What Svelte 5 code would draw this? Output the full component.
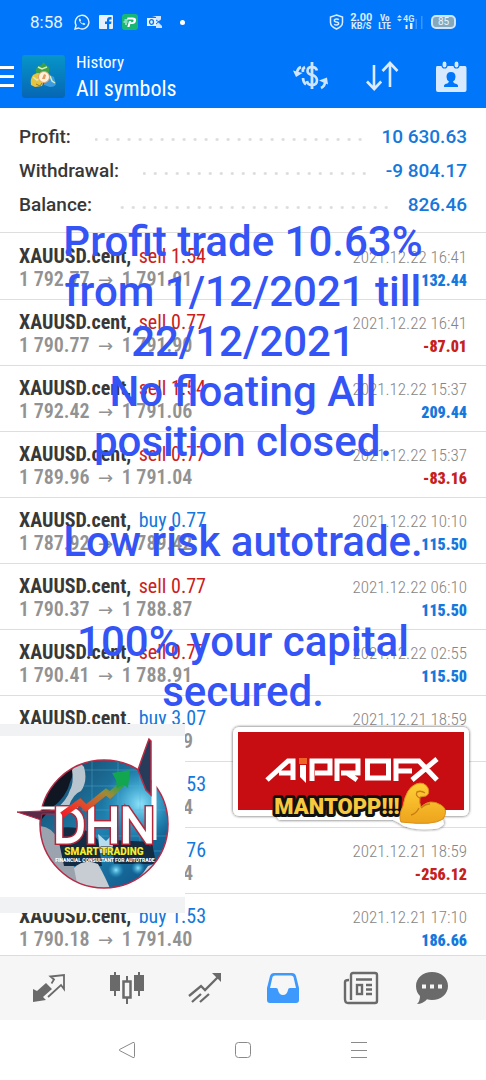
<script>
  const summary = [
    { label: 'Profit:', value: '10 630.63' },
    { label: 'Withdrawal:', value: '-9 804.17' },
    { label: 'Balance:', value: '826.46' }
  ];

  const trades = [
    { side: 'sell', volume: '1.54', open: '1 792.77', close: '1 791.91', time: '2021.12.22 16:41', result: '132.44' },
    { side: 'sell', volume: '0.77', open: '1 790.77', close: '1 791.90', time: '2021.12.22 16:41', result: '-87.01' },
    { side: 'sell', volume: '1.54', open: '1 792.42', close: '1 791.06', time: '2021.12.22 15:37', result: '209.44' },
    { side: 'sell', volume: '0.77', open: '1 789.96', close: '1 791.04', time: '2021.12.22 15:37', result: '-83.16' },
    { side: 'buy', volume: '0.77', open: '1 787.92', close: '1 789.42', time: '2021.12.22 10:10', result: '115.50' },
    { side: 'sell', volume: '0.77', open: '1 790.37', close: '1 788.87', time: '2021.12.22 06:10', result: '115.50' },
    { side: 'sell', volume: '0.77', open: '1 790.41', close: '1 788.91', time: '2021.12.22 02:55', result: '115.50' },
    { side: 'buy', volume: '3.07', open: '', close: '9', time: '2021.12.21 18:59', result: '' },
    { side: 'buy', volume: '1.53', open: '', close: '4', time: '', result: '' },
    { side: 'buy', volume: '0.76', open: '', close: '4', time: '2021.12.21 18:59', result: '-256.12' },
    { side: 'buy', volume: '1.53', open: '1 790.18', close: '1 791.40', time: '2021.12.21 17:10', result: '186.66' }
  ];

  const caption = [
    'Profit trade 10.63%',
    'from 1/12/2021 till',
    '22/12/2021',
    'No floating All',
    'position closed.',
    '',
    'Low risk autotrade.',
    '',
    '100% your capital',
    'secured.'
  ];
</script>

<div class="app">
  <header>
    <div class="status">
      <span class="clock">8:58</span>
      <svg width="16" height="16" viewBox="0 0 16 16" fill="none" stroke="#e8f2ff" stroke-width="1.4">
        <path d="M1 15l1.1-3.7A6.8 6.8 0 1 1 4.700 14z" />
        <path d="M5.200 4.500c-.8 1 0 3 1.500 4.500s3.300 2.500 4.500 1.500l-.1-1-1.600-.8-.9.800c-1-.4-1.900-1.300-2.300-2.200l.8-.9-.7-1.700z" fill="#e8f2ff" stroke="none" />
      </svg>
      <svg width="14" height="14" viewBox="0 0 14 14">
        <rect width="14" height="14" rx="1" fill="#e8f2ff" />
        <path d="M8 14V9H6V6.600h2V5c0-2 1-3 3-3h1.500v2.400H11c-.6 0-.8.300-.8.900v1.300h2.300L12.100 9h-1.900v5z" fill="#0077fb" />
      </svg>
      <svg width="16" height="16" viewBox="0 0 16 16">
        <rect width="16" height="16" rx="3" fill="#19b775" />
        <path d="M5.500 3.500h5q4 0 3.500 3.300-.5 3.200-4 3.200H8.300l-.8 3H5.300l1.700-6h2.300l-.4 1.300h1q1.400 0 1.700-1.300.2-1.400-1.300-1.400H5zM2.500 5.500h3v1h-3zM1.500 7.500h4v1h-4zM3 9.500h2v1H3z" fill="#fff" />
      </svg>
      <svg width="16" height="14" viewBox="0 0 16 14">
        <path d="M5 1h9v4l-3 2 4 4v2H9V2z" fill="#cfe4ff" />
        <rect y="3" width="9" height="8" fill="#e8f2ff" />
        <ellipse cx="4.500" cy="7" rx="2" ry="2.300" fill="none" stroke="#0077fb" stroke-width="1.300" />
        <path d="M9 5l6 4M9 9l6-5" stroke="#0077fb" />
      </svg>
      <i class="dot"></i>
      <div class="signals">
        <svg width="15" height="16" viewBox="0 0 15 16" fill="none" stroke="#dcebff" stroke-width="1.500">
          <path d="M7.500 1l6 2v5.500c0 3-2.500 5-6 6.500-3.500-1.500-6-3.500-6-6.500V3z" />
          <path d="M9.800 5.800Q9 4.900 7.500 5 5.400 5.100 5.400 6.500T7.500 8t2.100 1.500T7.500 11Q6 11 5.200 10.200" />
        </svg>
        <span class="rate"><b>2.00</b><b>KB/S</b></span>
        <span class="lte"><b>Vo</b><b>LTE</b></span>
        <svg width="26" height="16" viewBox="0 0 26 16">
          <path d="M0 3.500L2.500 1 5 3.500zM0 5l2.500 2.500L5 5z" fill="#cfe4ff" />
          <text x="6" y="7.500" font-size="9" font-weight="700" fill="#cfe4ff">4G</text>
          <path d="M8.500 11h2v4h-2zM13 9h2.500v6H13z" fill="#e8f2ff" />
          <path d="M18.500 5h1.500v10h-1.500zM24 2h1.500v13H24z" fill="#3d96fb" />
        </svg>
        <span class="battery">85</span>
      </div>
    </div>

    <div class="toolbar">
      <button class="menu" aria-label="Menu"><i></i><i></i><i></i></button>
      <svg class="logo" width="43" height="43" viewBox="0 0 43 43">
        <defs>
          <linearGradient id="tile" x1="0" y1="0" x2="0" y2="1">
            <stop offset="0" stop-color="#0795c9" /><stop offset="1" stop-color="#0666b4" />
          </linearGradient>
        </defs>
        <rect width="43" height="43" rx="3" fill="url(#tile)" />
        <path d="M21.500 7q2 3 5 4.500 2 4-1 8l-5 2-6-3q-2-4 1.500-7 4-1 5.500-4.500z" fill="#3da04b" />
        <path d="M9 30q-1-6 2-10l4-2q6 0 8 5l-3 8-7 1z" fill="#e8c33d" />
        <path d="M22 24q2-5 6-4l4 2q1 4 2 7-1 3-6 3l-6-2z" fill="#3d9be0" />
        <path d="M16 12l4 2 5-2M11 22l4 3 4-2M28 21l2 5 3 2" stroke="#d5eebc" fill="none" stroke-width="1.500" />
        <path d="M14 29l4 2 2-3" fill="none" stroke="#9b7a1c" />
        <circle cx="22" cy="22" r="5.500" fill="#fff1dc" stroke="#dfa069" />
        <path d="M20 24l2-5 2 1-1 4z" fill="#e59b60" />
      </svg>
      <h1><small>History</small>All symbols</h1>
      <div class="actions">
        <button aria-label="Convert currency">
          <svg width="36" height="30" viewBox="0 0 36 30" fill="none" stroke="#cfe5ff" stroke-width="2.600">
            <path d="M19 1v27" stroke-width="2.800" />
            <path d="M24 9.500Q23 6 19 6q-4.500 0-4.500 4 0 3 4.500 4t5 5q0 5-5 5-4.500 0-5-4" />
            <path d="M12 6q-3 1.500-2 5M10 17q0 4 3 6.500" />
            <path d="M8 6Q5 7 4 11" /><path d="M0 9.500L3 16l6.500-4z" fill="#cfe5ff" stroke="none" />
            <path d="M28 27q4-2 4-6" /><path d="M26 19.500l8-3 1 7z" fill="#cfe5ff" stroke="none" />
          </svg>
        </button>
        <button aria-label="Sort">
          <svg width="34" height="30" viewBox="0 0 34 30" fill="none" stroke="#dcebff" stroke-width="2.600">
            <path d="M9 4v24M2 20.500L9.200 28l7-7.500M25 26V2M17.500 10L25 2l7.500 8" />
          </svg>
        </button>
        <button aria-label="Choose period">
          <svg width="32" height="33" viewBox="0 0 32 33">
            <path d="M2 6h28q1.500 0 1.500 2v22q0 2-2 2H3q-2 0-2-2V8q0-2 1-2z" fill="#d6e9ff" />
            <g fill="#d6e9ff" stroke="#0077fb" stroke-width="1.200">
              <rect x="7" y="1" width="5" height="7" rx="2.500" /><rect x="19" y="1" width="5" height="7" rx="2.500" />
            </g>
            <path d="M16 12q-4.500 0-4.500 5 0 3 2.500 4.500-.5 2-3.500 2.500-2 .5-1.500 3h14q.5-2.500-1.500-3-3-.5-3.500-2.500 2.500-1.500 2.500-4.500 0-5-4.500-5z" fill="#0077fb" />
          </svg>
        </button>
      </div>
    </div>
  </header>

  <dl class="summary">
    {#each summary as row}
      <div><dt>{row.label}</dt><span class="leader"></span><dd>{row.value}</dd></div>
    {/each}
  </dl>

  <ul class="trades">
    {#each trades as t}
      <li>
        <div class="line">
          <span><b>XAUUSD.cent,</b> <em class={t.side}>{t.side} {t.volume}</em></span>
          <time>{t.time}</time>
        </div>
        <div class="line prices">
          {#if t.open}
            <span>{t.open}<i>→</i>{t.close}</span>
          {:else}
            <span class="partial">{t.close}</span>
          {/if}
          <strong class:loss={t.result.startsWith('-')}>{t.result}</strong>
        </div>
      </li>
    {/each}
  </ul>

  <nav class="tabs">
    <button aria-label="Quotes">
      <svg width="34" height="30" viewBox="0 0 34 30">
        <path d="M1 16l4 2 9-8 6 6-9 8 3 3-13 2z" fill="#6a6a6a" />
        <path d="M16 24L29 12l3 4V2L18.500 3.500l3.500 3-2.500 4" fill="none" stroke="#6a6a6a" stroke-width="1.800" />
      </svg>
    </button>
    <button aria-label="Charts">
      <svg width="36" height="34" viewBox="0 0 36 34">
        <path d="M1 4h10v16H1zM25 4h10v16H25zM5 1h2v24H5zM29 1h2v24h-2zM17 5h2v5h-2zM17 27h2v6h-2z" fill="#6a6a6a" />
        <rect x="14.500" y="10.500" width="7" height="16" fill="none" stroke="#6a6a6a" stroke-width="2.500" />
      </svg>
    </button>
    <button aria-label="Trade">
      <svg width="34" height="32" viewBox="0 0 34 32" fill="none" stroke="#6a6a6a" stroke-width="2.300">
        <path d="M1 24l12-10 4 4L31 4M4 30l9-8M12 30l9-8" />
        <path d="M24 1h9v9z" fill="#6a6a6a" stroke="none" />
      </svg>
    </button>
    <button aria-label="History" aria-current="page">
      <svg width="34" height="32" viewBox="0 0 34 32">
        <path fill-rule="evenodd" d="M8 1h18q3 0 4 3l3 12v12q0 3-3 3H4q-3 0-3-3V16L4 4q1-3 4-3zm1 2.500Q7 3.500 6.500 5L4 16h6q2 0 2 2 1 5 5 5t5-5q0-2 2-2h6L27.500 5Q27 3.500 25 3.500z" fill="#3d99fb" />
      </svg>
    </button>
    <button aria-label="News">
      <svg width="36" height="34" viewBox="0 0 36 34" fill="none" stroke="#6a6a6a" stroke-width="2.400">
        <path d="M8 29V4q0-2 2-2h22q2 0 2 2v26q0 2-2 2H5q-3 0-3-4V11q0-2 4-2M13 8.500h16M23 14h6M23 18.500h6M23 23h6" />
        <rect x="14" y="14" width="5" height="9" />
      </svg>
    </button>
    <button aria-label="Messages">
      <svg width="34" height="34" viewBox="0 0 34 34">
        <path d="M17 1c9 0 16 6 16 14s-7 14-16 14q-3 0-5-.8Q8 33 2 33q3-3 3-8-4-4-4-10C1 7 8 1 17 1z" fill="#6a6a6a" />
        <path d="M7 13.500h4v4H7zM15 13.500h4v4h-4zM23 13.500h4v4h-4z" fill="#f6f6f6" />
      </svg>
    </button>
  </nav>

  <nav class="system">
    <button aria-label="Back">
      <svg width="18" height="18" viewBox="0 0 18 18" fill="none" stroke="#8a8a8a"><path d="M15 1.500q1.500-.5 1.500 1v13q0 1.500-1.500 1L1.500 9.500q-.8-.5 0-1z" /></svg>
    </button>
    <button aria-label="Home">
      <svg width="18" height="18" viewBox="0 0 18 18" fill="none" stroke="#8a8a8a"><rect x="1.500" y="1.500" width="15" height="15" rx="3" /></svg>
    </button>
    <button aria-label="Recent apps">
      <svg width="18" height="18" viewBox="0 0 18 18" stroke="#8a8a8a"><path d="M1 1.500h16M1 9.500h16M1 16.500h16" /></svg>
    </button>
  </nav>

  <div class="caption">
    {#each caption as line}<p>{line}</p>{/each}
  </div>

  <div class="badge">
    <svg width="185" height="161" viewBox="0 0 185 161">
      <defs>
        <linearGradient id="globe" x1="0" y1="0" x2="1" y2="1">
          <stop offset="0" stop-color="#153b5b" /><stop offset=".5" stop-color="#1f83b1" /><stop offset="1" stop-color="#0c4d80" />
        </linearGradient>
        <linearGradient id="rise" x1="0" y1="1" x2="1" y2="0">
          <stop offset="0" stop-color="#f01c28" /><stop offset=".3" stop-color="#e8432a" /><stop offset=".7" stop-color="#a08a35" /><stop offset="1" stop-color="#12a650" />
        </linearGradient>
        <radialGradient id="shine">
          <stop offset="0" stop-color="#8fe3fb" /><stop offset="1" stop-color="#2ba5d5" stop-opacity="0" />
        </radialGradient>
        <clipPath id="disc"><circle cx="104" cy="88" r="64" /></clipPath>
      </defs>
      <circle cx="104" cy="88" r="64" fill="url(#globe)" />
      <g clip-path="url(#disc)">
        <circle cx="140" cy="68" r="38" fill="url(#shine)" />
        <path d="M82 50h90M82 74h90M84 34h80M92 20v60M118 20v70M140 20v100M60 100h110M130 115h40" stroke="#55b4d7" stroke-width=".7" opacity=".6" />
        <path d="M36 76Q38 30 80 22q-6 14-10 24-3 14-18 26-8 8-14 16z" fill="#101722" />
        <path d="M72 34q7-10 12-3 4 14-3 24-8 3-12 15-6 5-12 2 10-8 13-18 4-7 2-20z" fill="#b8c5cf" />
        <path d="M38 90q14 0 20 14l18 30 14 30H60Q36 140 38 90z" fill="#9ba4ae" />
        <path d="M56 92q30-4 42 12l4 26H64zM112 104l40 2 4 22-42 0z" fill="#142b44" />
        <path d="M74 132q10-10 24-4 10 18 14 30-20 4-34-6z" fill="#c7cdd2" />
        <path d="M110 158q26-8 38-28l18-6-12 28-38 16z" fill="#d1d6da" />
        <path d="M98 98l8 7 8-8-2 20H100z" fill="#b6dcee" />
        <circle cx="116" cy="134" r="8" fill="url(#shine)" /><circle cx="138" cy="132" r="7" fill="url(#shine)" />
      </g>
      <circle cx="104" cy="88" r="64" fill="none" stroke="#b72b46" stroke-width="1.500" />
      <path d="M154 34v70" stroke="#fff" stroke-width="5" />
      <path d="M138 34q4-12 11-31l2 2v54l-5-5-8-20z" fill="#263c5a" stroke="#b72b46" stroke-width="1.500" />
      <path d="M17 76l50-2v4H42l-1 6z" fill="#5d2946" stroke="#b72b46" />
      <path d="M38 72h40" stroke="#fff" stroke-width="3" />
      <g class="dhn" text-anchor="middle">
        <text x="104" y="106" font-size="49">DHN</text>
        <text class="inner" x="104" y="106" font-size="49">DHN</text>
      </g>
      <path d="M62 79L80 66l6 6 20-16 4 3 13-12" fill="none" stroke="url(#rise)" stroke-width="6" />
      <path d="M112 37l18-3-2 18-5-4-6 4-1-8z" fill="#12a650" />
      <text class="smart" x="104" y="119" text-anchor="middle" font-size="10">SMART TRADING</text>
      <text class="tag" x="105" y="126" text-anchor="middle" font-size="5">FINANCIAL CONSULTANT FOR AUTOTRADE</text>
    </svg>
  </div>

  <div class="banner">
    <svg width="244" height="108" viewBox="0 0 244 108">
      <defs>
        <filter id="drop" x="-10%" y="-10%" width="120%" height="130%"><feDropShadow dx="0" dy="0" stdDeviation="1.500" flood-color="#222" flood-opacity=".8" /></filter>
        <linearGradient id="skin" x1="0" y1="0" x2="0" y2="1"><stop offset="0" stop-color="#ffcf36" /><stop offset="1" stop-color="#eda31d" /></linearGradient>
      </defs>
      <g filter="url(#drop)">
        <rect x="4" y="3" width="236" height="89" rx="6" fill="#fff" />
        <path d="M43 86h128l40-6 4 20q-4 5-10 5-26 2-35-6l-6-3H50z" fill="#fff" />
      </g>
      <rect x="9" y="8" width="226" height="78" fill="#c70c12" />
      <g fill="none" stroke="#fff" stroke-width="5">
        <path d="M38 56L59 37h5v19M50 49h13" />
        <path d="M83 57V37h18v12H86M108 57V37h21v12h-17M118 49l10 7M138.500 37h21v17h-21zM167 57V37h20M169 47h14M184 37h6l18 19M208 35l-25 21" />
      </g>
      <path d="M71 41h6v18l-6-6z" fill="#fff" /><path d="M70 34h8v6h-8z" fill="#ee6425" />
      <text class="mantopp" x="108" y="90" text-anchor="middle" font-size="22">MANTOPP!!!</text>
      <path d="M172 98q-3-6 2-16 3-18 13-22 8-3 12 4 2 6-2 8l-6 1q-1 6 1 10 9-9 20-2 8 5 2 14-9 7-42 3z" fill="url(#skin)" stroke="#db901b" />
      <path d="M191 74q-5-2-3-6 4-2 8 1M190 84q-3 6-8 7M192 84q4-4 9-4" fill="none" stroke="#c87d16" stroke-width="1.400" />
    </svg>
  </div>
</div>

<style>
  :global(body) { background: #fff; }
  .app {
    position: relative;
    display: flex;
    flex-direction: column;
    height: 100vh;
    overflow: hidden;
    background: #fff;
    color: #383838;
    font-family: "Roboto Condensed", "Liberation Sans Narrow", Roboto, sans-serif;
  }
  button { display: grid; place-items: center; padding: 0; border: 0; background: none; }
  svg { display: block; }

  header { background: #0077fb; color: #fff; }
  .status { display: flex; align-items: center; height: 44px; padding: 0 30px; gap: 9px; font-family: Roboto, sans-serif; }
  .clock { font-size: 17px; margin-right: 2px; color: #e8f2ff; }
  .dot { width: 5px; height: 5px; margin-left: 8px; border-radius: 50%; background: #fff; }
  .signals { display: flex; align-items: center; gap: 6px; margin-left: auto; }
  .rate, .lte { display: flex; flex-direction: column; align-items: center; color: #dcebff; font-size: 9px; line-height: 8px; }
  .rate b:first-child { font-size: 11px; }
  .lte { font-family: "Roboto Condensed", Roboto, sans-serif; }
  .battery {
    width: 21px; margin-left: 2px; border: 2px solid #cfe4ff; border-radius: 5px;
    background: #84a9bb; color: #e8f2ff; font-size: 10px; line-height: 10px; text-align: center;
  }

  .toolbar { display: flex; align-items: center; height: 64px; padding-right: 19px; gap: 8px; }
  .menu { width: 14px; gap: 6px; }
  .menu i { width: 14px; height: 3px; background: #fff; }
  .logo { margin-right: 3px; }
  h1 { flex: 1; margin: 0; font-size: 22px; line-height: 28px; font-weight: 400; }
  h1 small { display: block; font-size: 17px; line-height: 26px; }
  .actions { display: flex; align-items: center; gap: 36px; }

  .summary { margin: 0; padding: 11px 19px; border-bottom: 1px solid #dedede; font-family: Roboto, sans-serif; }
  .summary div { display: flex; align-items: center; height: 34px; font-size: 19px; font-weight: 500; }
  .summary dd { margin: 0; color: #1478dc; }
  .leader {
    flex: 1; height: 5px; margin: 6px 16px 0 24px;
    background: radial-gradient(circle, #dcdcdc 1px, transparent 2px) right center / 11px 5px repeat-x;
  }

  .trades { flex: 1; min-height: 0; overflow: hidden; margin: 0; padding: 1px 0 0; list-style: none; }
  li { box-sizing: border-box; height: 66px; padding: 11px 19px 0; border-bottom: 1px solid #dedede; }
  .line { display: flex; justify-content: space-between; align-items: baseline; height: 23px; line-height: 23px; font-size: 20px; white-space: nowrap; }
  em { margin-left: 3px; font-style: normal; }
  .sell { color: #cb2020; }
  .buy { color: #1478dc; }
  time { color: #858585; font-size: 17px; font-weight: 350; }
  .prices { color: #929292; font-weight: 600; }
  .prices i { display: inline-block; width: 32px; font: 18px/20px "DejaVu Sans", sans-serif; text-align: center; }
  .partial { padding-left: 164px; }
  strong { color: #1478dc; font-size: 16px; }
  .loss { color: #c62020; }

  .tabs { display: flex; align-items: center; height: 64px; padding: 0 22px 0 10px; border-top: 1px solid #dcdcdc; background: #f6f6f6; }
  .tabs button { flex: 78 1 0; }
  .tabs button:last-child { flex-grow: 64; }
  .system { display: flex; justify-content: center; align-items: center; gap: 98px; height: 60px; background: #fff; }

  .caption { position: absolute; top: 217px; left: 0; right: 0; color: #3454f5; font: 500 42px/50px Roboto, sans-serif; text-align: center; }
  .caption p { height: 50px; margin: 0; white-space: nowrap; }

  .badge { position: absolute; left: 0; top: 724px; border: solid #f1f2f4; border-width: 12px 0 16px; background: #fff; }
  .dhn text { font-family: Roboto, sans-serif; font-weight: 300; fill: #fff; stroke: #b3273b; stroke-width: 6px; paint-order: stroke; }
  .dhn .inner { fill: #b3273b; stroke: #fff; stroke-width: 3px; paint-order: fill; }
  .smart { font-family: Roboto, sans-serif; font-weight: 900; fill: #f3ed33; stroke: #1f2612; stroke-width: 1px; paint-order: stroke; }
  .tag { font-family: Roboto, sans-serif; font-weight: 900; fill: #fff; }
  .banner { position: absolute; left: 229px; top: 724px; }
  .mantopp { font-family: Roboto, sans-serif; font-weight: 900; fill: #f8c83e; stroke: #111; stroke-width: 6px; stroke-linejoin: round; paint-order: stroke; }
</style>
